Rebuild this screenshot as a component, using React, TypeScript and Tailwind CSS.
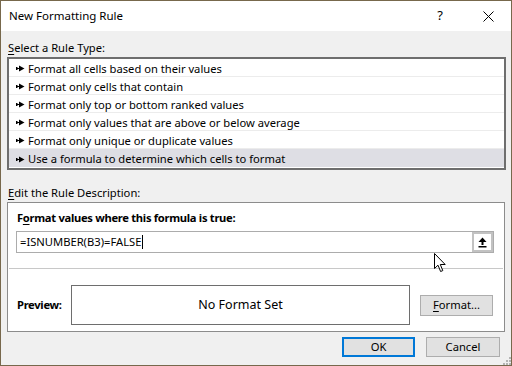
import React from "react";

const RULE_TYPES = [
  "Format all cells based on their values",
  "Format only cells that contain",
  "Format only top or bottom ranked values",
  "Format only values that are above or below average",
  "Format only unique or duplicate values",
  "Use a formula to determine which cells to format",
];

function RowArrow() {
  return (
    <svg width="9" height="7" viewBox="0 0 9 7" className="shrink-0">
      <rect x="0" y="2" width="1.5" height="3" fill="#000" />
      <rect x="0" y="3" width="4" height="1" fill="#000" />
      <polygon points="3,0.5 8.5,3.5 3,6.5" fill="#000" />
    </svg>
  );
}

function CollapseIcon() {
  return (
    <svg width="9" height="11" viewBox="0 0 9 11">
      <polygon points="4.5,0.5 0.5,5 8.5,5" fill="#000" />
      <rect x="3.5" y="4.5" width="2" height="3.5" fill="#000" />
      <rect x="0.5" y="9" width="8" height="1.5" fill="#000" />
    </svg>
  );
}

function Pointer() {
  return (
    <svg width="14" height="20" viewBox="0 0 14 20" className="absolute left-[433px] top-[252px]">
      <path
        d="M0.5 0.5 L0.5 15.5 L4 12.2 L6.6 18.5 L8.8 17.6 L6.3 11.5 L11.2 11.5 Z"
        fill="#fff"
        stroke="#000"
        strokeWidth="1"
        strokeLinejoin="miter"
      />
    </svg>
  );
}

function SizeGrip() {
  const dots = [
    [6, 0],
    [3, 3],
    [6, 3],
    [0, 6],
    [3, 6],
    [6, 6],
  ];
  return (
    <svg width="8" height="8" viewBox="0 0 8 8" className="absolute left-[502px] top-[356px]">
      {dots.map(([x, y]) => (
        <rect key={`${x}-${y}`} x={x} y={y} width="2" height="2" fill="#b4b4b4" />
      ))}
    </svg>
  );
}

export default function App() {
  return (
    <div
      className="relative h-[366px] w-[512px] border border-[#77684c] bg-[#f0f0f0] text-[11.2px] text-black"
      style={{ fontFamily: '"Noto Sans", "Liberation Sans", sans-serif' }}
    >
      {/* title bar */}
      <div className="flex h-[30px] items-center bg-white">
        <span className="ml-[8px] text-[11.5px]">New Formatting Rule</span>
        <span className="ml-auto mr-[40px] text-[13px]">?</span>
        <svg width="11" height="11" viewBox="0 0 11 11" className="mr-[17px]">
          <path d="M0.5 0.5 L10.5 10.5 M10.5 0.5 L0.5 10.5" stroke="#000" strokeWidth="1" />
        </svg>
      </div>

      <div className="flex flex-col">
        <div className="ml-[7px] mt-[9px] h-[16px] leading-[16px]">
          <span className="underline underline-offset-2">S</span>elect a Rule Type:
        </div>

        {/* rule type list */}
        <div className="ml-[6px] mt-[1px] w-[499px] border-2 border-[#6e6e6e] bg-white">
          <div className="h-[109px]">
            {RULE_TYPES.map((t, i) => (
              <div
                key={t}
                className={
                  i === RULE_TYPES.length - 1
                    ? "flex h-[18px] items-center gap-[3px] bg-[#dedee4] pl-[7px] pt-[2px]"
                    : "flex h-[18px] items-center gap-[3px] border-b border-[#ececec] pl-[7px] pt-[2px]"
                }
              >
                <RowArrow />
                <span className="leading-[16px]">{t}</span>
              </div>
            ))}
          </div>
        </div>

        <div className="ml-[7px] mt-[15px] h-[16px] leading-[16px]">
          <span className="underline underline-offset-2">E</span>dit the Rule Description:
        </div>

        {/* description panel */}
        <div className="ml-[6px] mt-[1px] flex h-[130px] w-[498px] flex-col border border-[#8c8c8c] bg-white">
          <div className="ml-[9px] mt-[7px] h-[16px] font-bold leading-[16px] tracking-[-0.3px]">
            F<span className="underline underline-offset-2">o</span>rmat values where this formula is true:
          </div>
          <div className="ml-[8px] mt-[5px] flex h-[22px] w-[478px] items-center border border-[#acacac]">
            <span className="ml-[3px] leading-[16px]">=ISNUMBER(B3)=FALSE</span>
            <span className="ml-[1px] h-[14px] w-px bg-black" />
            <div className="ml-auto flex h-[20px] w-[21px] items-center justify-center border-2 border-[#c2c2c2] bg-white">
              <CollapseIcon />
            </div>
          </div>
          <div className="mx-[1px] mt-[15px] h-px bg-[#c8c8c8]" />
          <div className="mt-[16px] flex items-center">
            <span className="ml-[9px] w-[54px] font-bold tracking-[-0.3px]">Preview:</span>
            <div className="flex h-[40px] w-[339px] items-center justify-center border border-[#6e6e6e] text-[12.5px]">
              No Format Set
            </div>
            <button
              type="button"
              className="ml-[10px] h-[21px] w-[73px] border border-[#adadad] bg-[#e1e1e1] text-[11.2px] leading-[16px]"
            >
              <span className="underline underline-offset-2">F</span>ormat...
            </button>
          </div>
        </div>

        {/* dialog buttons */}
        <div className="mr-[11px] mt-[5px] flex justify-end gap-[11px]">
          <button
            type="button"
            className="h-[20px] w-[73px] border-2 border-[#0078d7] bg-[#e1e1e1] text-[11.2px] leading-[16px]"
          >
            OK
          </button>
          <button
            type="button"
            className="h-[20px] w-[74px] border border-[#adadad] bg-[#e1e1e1] text-[11.2px] leading-[16px]"
          >
            Cancel
          </button>
        </div>
      </div>

      <Pointer />
      <SizeGrip />
    </div>
  );
}
